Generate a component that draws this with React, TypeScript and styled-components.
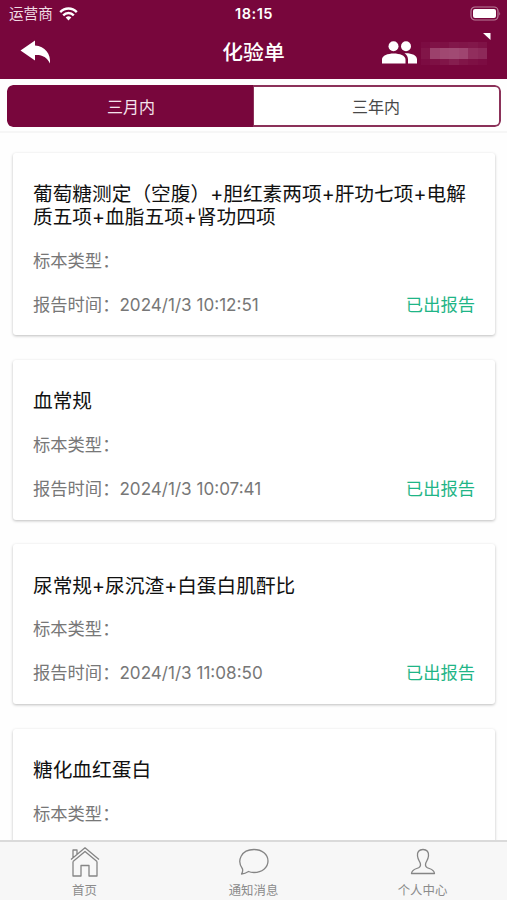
import React from 'react';
import styled, { createGlobalStyle } from 'styled-components';

const maroon = '#78063c';

const GlobalStyle = createGlobalStyle`
  * { box-sizing: border-box; }
  body { margin: 0; background: #fefefe; }
`;

const Screen = styled.div`
  width: 507px;
  height: 900px;
  overflow: hidden;
  display: flex;
  flex-direction: column;
  background: #fefefe;
  font-family: Inter, 'Noto Sans CJK SC', sans-serif;
`;

const Header = styled.header`
  flex: none;
  height: 79px;
  background: ${maroon};
  color: #fff;
`;

const StatusBar = styled.div`
  display: grid;
  grid-template-columns: 1fr auto 1fr;
  align-items: center;
  height: 27px;
  padding: 0 6px 0 9px;
`;

const Carrier = styled.div`
  display: flex;
  align-items: center;
  gap: 6px;
  font-size: 14.6px;
  line-height: 20px;
  color: #f0dce5;
`;

const Clock = styled.div`
  margin-right: 2px;
  font-size: 14.6px;
  font-weight: 600;
  letter-spacing: 0.5px;
  line-height: 20px;
`;

const Battery = styled.svg`
  justify-self: end;
  display: block;
`;

const NavBar = styled.div`
  display: grid;
  grid-template-columns: 1fr auto 1fr;
  align-items: center;
  height: 50px;
  padding: 0 20px;
`;

const Title = styled.h1`
  margin: 2px 0 0;
  font-size: 20.8px;
  font-weight: 500;
  line-height: 30px;
`;

const Account = styled.div`
  position: relative;
  justify-self: end;
  display: flex;
  align-items: center;
  gap: 4px;
`;

const MaskedName = styled.div`
  display: grid;
  grid-template-columns: repeat(7, 9.5px);
  grid-template-rows: 6px 11px 6px;
  margin-top: 3px;
`;

const MaskCell = styled.span<{ $tone: number }>`
  background: rgba(255, 225, 240, ${p => p.$tone});
`;

const Corner = styled.svg`
  position: absolute;
  right: -4px;
  top: -6px;
`;

const Segments = styled.div`
  flex: none;
  height: 54px;
  padding: 6px 6px 6px 7px;
  border-bottom: 2px solid #f6f6f6;
`;

const SegmentGroup = styled.div`
  display: grid;
  grid-template-columns: 246px 1fr;
  height: 42px;
  border-radius: 6px;
  overflow: hidden;
`;

const Segment = styled.button<{ $active?: boolean }>`
  border: 2px solid ${p => (p.$active ? maroon : '#8b3159')};
  border-left-width: ${p => (p.$active ? 2 : 1)}px;
  border-radius: ${p => (p.$active ? '6px 0 0 6px' : '0 6px 6px 0')};
  padding: ${p => (p.$active ? '0 0 1px 2px' : '0 1px 1px 0')};
  font: inherit;
  font-size: 16px;
  color: ${p => (p.$active ? '#f5e3ec' : '#484848')};
  background: ${p => (p.$active ? maroon : '#fff')};
`;

const List = styled.main`
  flex: 1;
  min-height: 0;
  overflow: hidden;
  display: flex;
  flex-direction: column;
  gap: 24.5px;
  padding: 19.5px 12px 0 13px;
`;

const Card = styled.article`
  flex: none;
  min-height: 160px;
  padding: 30.5px 20px 20.8px;
  background: #fff;
  border-radius: 3px;
  box-shadow: 0 1px 3px rgba(0, 0, 0, 0.26);
`;

const CardTitle = styled.h2`
  margin: 0 0 20.8px;
  font-size: 19.7px;
  font-weight: 400;
  line-height: 23.4px;
  color: #111;
`;

const CardRow = styled.div`
  display: flex;
  justify-content: space-between;
  height: 20px;
  font-size: 17.3px;
  line-height: 20px;
  color: #777;
  & + & { margin-top: 24px; }
`;

const Time = styled.span`
  font-size: 17.1px;
`;

const Done = styled.span`
  color: #1fb587;
`;

const TabBar = styled.nav`
  flex: none;
  display: grid;
  grid-template-columns: repeat(3, 1fr);
  height: 60px;
  border-top: 2px solid #dadada;
  background: #f7f7f7;
`;

const Tab = styled.a`
  display: flex;
  flex-direction: column;
  align-items: center;
  padding-top: 4px;
  font-size: 12.4px;
  line-height: 18px;
  color: #8b8b8b;
  svg { display: block; margin-bottom: 4.5px; }
`;

const mask = [
  0.03, 0.06, 0.05, 0.08, 0.07, 0.08, 0.06,
  0.07, 0.27, 0.3, 0.31, 0.29, 0.19, 0.16,
  0.03, 0.05, 0.07, 0.11, 0.07, 0.05, 0.03,
];

const reports: { title: string; time?: string }[] = [
  { title: '葡萄糖测定（空腹）+胆红素两项+肝功七项+电解质五项+血脂五项+肾功四项', time: '2024/1/3 10:12:51' },
  { title: '血常规', time: '2024/1/3 10:07:41' },
  { title: '尿常规+尿沉渣+白蛋白肌酐比', time: '2024/1/3 11:08:50' },
  { title: '糖化血红蛋白' },
];

const iconLine = { fill: 'none', stroke: '#858585', strokeWidth: 1.3, strokeLinejoin: 'round' as const };

export default function App() {
  return (
    <>
      <GlobalStyle />
      <Screen>
        <Header>
          <StatusBar>
            <Carrier>
              运营商
              <svg width="19" height="14" viewBox="0 0 19 14" fill="none" stroke="#fff" strokeWidth="2.4">
                <path d="M1.2 5.2C6 .3 13 .3 17.8 5.2M4.2 8.3c3-3 7.6-3 10.6 0" />
                <path d="M6.7 10.4q2.8-2.2 5.6 0L9.5 13.4z" fill="#fff" stroke="none" />
              </svg>
            </Carrier>
            <Clock>18:15</Clock>
            <Battery width="31" height="15" viewBox="0 0 31 15">
              <rect x="1" y="1" width="27" height="13" rx="4" fill="none" stroke="#ba7e9a" strokeWidth="1.2" />
              <rect x="3" y="3" width="23" height="9" rx="2" fill="#fff" />
              <path d="M29.3 5.5q1.5 2 0 4z" fill="#ba7e9a" />
            </Battery>
          </StatusBar>
          <NavBar>
            <svg width="31" height="24" viewBox="0 0 31 24" fill="#fff">
              <path d="M.5 10.5 15 .5v5C25 6 31 14 30 23.5 27 17 22 14.5 15 15v5.5z" />
            </svg>
            <Title>化验单</Title>
            <Account>
              <svg width="35" height="23" viewBox="0 0 35 23" fill="#fff">
                <circle cx="11.5" cy="5.2" r="5" />
                <circle cx="24" cy="5.2" r="5" />
                <path d="M0 22.5v-4c0-8 23.5-8 23.5 0v4zM22.5 12.2c7-.3 12.5 1.8 12.5 6.3v4h-9v-4c0-2.5-1.2-4.8-3.5-6.3z" />
              </svg>
              <MaskedName>
                {mask.map((tone, i) => <MaskCell key={i} $tone={tone} />)}
              </MaskedName>
              <Corner width="8" height="7" viewBox="0 0 8 7"><path d="M0 0h7.5v7z" fill="#fff" /></Corner>
            </Account>
          </NavBar>
        </Header>
        <Segments>
          <SegmentGroup>
            <Segment $active>三月内</Segment>
            <Segment>三年内</Segment>
          </SegmentGroup>
        </Segments>
        <List>
          {reports.map(r => (
            <Card key={r.title}>
              <CardTitle>{r.title}</CardTitle>
              <CardRow>标本类型：</CardRow>
              {r.time && (
                <CardRow>
                  <span>报告时间：<Time>{r.time}</Time></span>
                  <Done>已出报告</Done>
                </CardRow>
              )}
            </Card>
          ))}
        </List>
        <TabBar>
          <Tab>
            <svg width="30" height="31" viewBox="0 0 30 31" {...iconLine}>
              <path d="M1 13.5 15 1.8l14 11.7M3 15.5V30h8V19.5h8V30h8V15.5M3 15.5 15 5.5l12 10M3 11.5V4h4v4.2" />
            </svg>
            首页
          </Tab>
          <Tab>
            <svg width="30" height="31" viewBox="0 0 30 31" {...iconLine}>
              <path d="M2.5 28c1-1.5 1.5-3 1-5C-2.5 15 2 3.5 15 3.5c8 0 14 5 14 11.5s-6 11.5-14 11.5c-2 0-4-.3-5.5-1C7.5 26.8 5 27.8 2.5 28z" />
            </svg>
            通知消息
          </Tab>
          <Tab>
            <svg width="30" height="31" viewBox="0 0 30 31" {...iconLine}>
              <path d="M15 3.5c-4 0-6 2.5-5.5 6.5.3 3 1.5 4.5 2.5 6.5.8 2 .5 4-1 5-2.5 1.5-7 1.5-7.5 6h23c-.5-4.5-5-4.5-7.5-6-1.5-1-1.8-3-1-5 1-2 2.2-3.5 2.500-6.500.4-4-1.500-6.500-5.500-6.500z" />
            </svg>
            个人中心
          </Tab>
        </TabBar>
      </Screen>
    </>
  );
}
